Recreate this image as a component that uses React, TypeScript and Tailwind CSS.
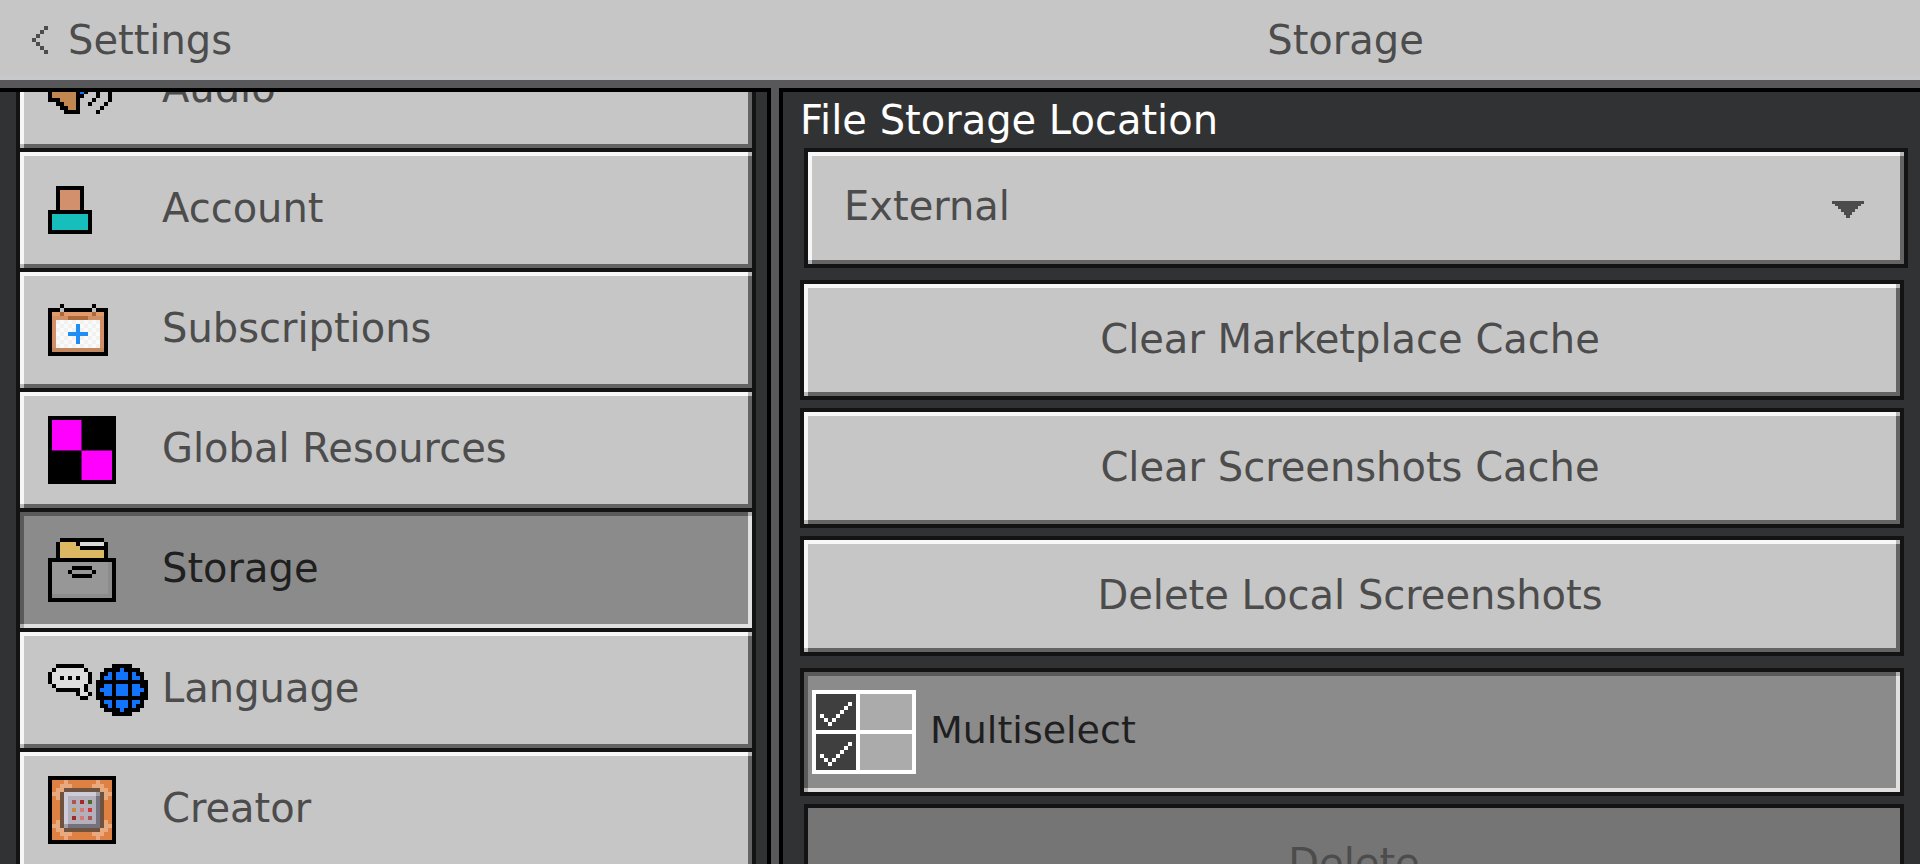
import { ReactNode } from 'react';
import clsx from 'clsx';

const PALETTE: Record<string, string> = {
  K: '#000000',
  S: '#d2906c',
  T: '#17bfbc',
  // calendar
  o: '#e39a6b',
  c: '#d29067',
  d: '#c4885f',
  n: '#ae693a',
  p: '#bdbdbd',
  w: '#fafafa',
  v: '#f1f1f1',
  B: '#1f8df5',
  // drawer
  Y: '#dbb861',
  L: '#d9d9d9',
  g: '#979797',
  h: '#8c8c8c',
  // language
  W: '#dedede',
  b: '#1273fb',
  // creator block
  O: '#df8143',
  l: '#e8a97f',
  m: '#70533f',
  a: '#cdcbd8',
  i: '#b3b0bb',
  s: '#a09daa',
  k: '#757280',
  '1': '#ae5552',
  '2': '#a12a29',
  '3': '#4f6b2c',
  '4': '#c48a3e',
  '5': '#d37a79',
  '6': '#d43635',
  // speaker
  r: '#c08850',
  D: '#4c4c4c',
};

const SPEAKER = [
  '.......K........',
  '......KK........',
  '.....KrK....K...',
  '....KrrK.....K..',
  'KKKKrrrK..K...K.',
  'KrrrrrrK...K..K.',
  'KrrrrrrKK...K..K',
  'KrrrrrrKbK..K..K',
  'KrrrrrrKbK..K..K',
  'KrrrrrrKbK..K..K',
  'KrrrrrrKbK..K..K',
  'KrrrrrrKK...K..K',
  'KKKrrrrK...K...K',
  '..KKrrrK..K...K.',
  '...KKrrK.....K..',
  '....KKKK....K...',
  '................',
  '................',
  '................',
  '................',
];

const ACCOUNT = [
  '..KKKKKKK..',
  '..KSSSSSK..',
  '..KSSSSSK..',
  '..KSSSSSK..',
  '..KSSSSSK..',
  '..KSSSSSK..',
  'KKKKKKKKKKK',
  'KTTTTTTTTTK',
  'KTTTTTTTTTK',
  'KTTTTTTTTTK',
  'KTTTTTTTTTK',
  'KKKKKKKKKKK',
];

const CALENDAR = [
  '...K.......K...',
  'KKKpKKKKKKKpKKK',
  'KoonooooooonooK',
  'KccccnnnnnccccK',
  'KcvwvwvwvwvwvcK',
  'KcwvwvwBwvwvwcK',
  'KcvwvwvBvwvwvcK',
  'KcwvwBBBBBwvwcK',
  'KcvwvwvBvwvwvcK',
  'KcwvwvwBwvwvwcK',
  'KcvwvwvwvwvwvcK',
  'KdddddddddddddK',
  'KKKKKKKKKKKKKKK',
];

const DRAWER = [
  '...KKKKKKKKKKK...',
  '..KYYYYKLLLLLLK..',
  '..KYYYYYKKKKKKK..',
  '..KYYYYYYYYYYYK..',
  '..KYYYYYYYYYYYK..',
  'KKKKKKKKKKKKKKKKK',
  'KgggggggggggggghK',
  'KgggggKKKKKgggghK',
  'KggggKgggggKggghK',
  'KgggggKKKKKgggghK',
  'KgggggggggggggghK',
  'KgggggggggggggghK',
  'KgggggggggggggghK',
  'KgggggggggggggghK',
  'KhhhhhhhhhhhhhhhK',
  'KKKKKKKKKKKKKKKKK',
];

const LANGUAGE = [
  '..KKKKKKK.......KKKKK....',
  '.KWWWWWWWK....KKKKbKKKK..',
  'KWWWWWWWWWK..KKbKbbbKbKK.',
  'KWWKWKWKWWK..KbbKbbbKbbK.',
  'KWWWWWWWWWK.KKKKKKKKKKKKK',
  '.KWWWWWWWK..KKbbKbbbKbbKK',
  '..KKKKKKWK..KbbbKbbbKbbbK',
  '.......KWWK.KKbbKbbbKbbKK',
  '........KK..KKKKKKKKKKKKK',
  '.............KbbKbbbKbbK.',
  '.............KKbKbbbKbKK.',
  '..............KKKKbKKKK..',
  '................KKKKK....',
];

const CREATOR = [
  'KKKKKKKKKKKKKKKKK',
  'KOOOlOOOOOOOlOOOK',
  'KOOlllOOOOOlllOOK',
  'KOllmmmmmmmmmllOK',
  'KllmaaaaaaaasmllK',
  'KOlmaiiiiiiikmlOK',
  'KOOmai1i2i3ikmOOK',
  'KOOmaiiiiiiikmOOK',
  'KOOmai4i5i6ikmOOK',
  'KOOmaiiiiiiikmOOK',
  'KOOmai2i5i1ikmOOK',
  'KOlmaiiiiiiikmlOK',
  'KllmskkkkkkkkmllK',
  'KOllmmmmmmmmmllOK',
  'KOOlllOOOOOlllOOK',
  'KOOOlOOOOOOOlOOOK',
  'KKKKKKKKKKKKKKKKK',
];

const CHEVRON = ['...D', '..D.', '.D..', 'D...', '.D..', '..D.', '...D'];

function PixelIcon({ rows }: { rows: string[] }) {
  const width = rows[0].length;
  return (
    <svg
      width={width * 4}
      height={rows.length * 4}
      viewBox={`0 0 ${width} ${rows.length}`}
      shapeRendering="crispEdges"
      aria-hidden="true"
      className="shrink-0"
    >
      {rows.map((row, y) =>
        row
          .split('')
          .map((ch, x) =>
            ch === '.' ? null : (
              <rect key={`${x}-${y}`} x={x} y={y} width={1} height={1} fill={PALETTE[ch]} />
            )
          )
      )}
    </svg>
  );
}

function MissingTextureIcon() {
  return (
    <svg width={68} height={68} viewBox="0 0 68 68" shapeRendering="crispEdges" aria-hidden="true">
      <rect width={68} height={68} fill="#000" />
      <rect x={4} y={4} width={30} height={31} fill="#7a007a" />
      <rect x={33} y={34} width={31} height={30} fill="#7a007a" />
      <rect x={4} y={4} width={29} height={30} fill="#f0f" />
      <rect x={34} y={35} width={30} height={29} fill="#f0f" />
    </svg>
  );
}

function MultiselectIcon() {
  const check = [[1, 5], [2, 6], [3, 7], [4, 6], [5, 5], [6, 4], [7, 3], [8, 2]];
  return (
    <svg
      width={104}
      height={84}
      viewBox="0 0 26 21"
      shapeRendering="crispEdges"
      aria-hidden="true"
      className="shrink-0"
    >
      <rect width={26} height={21} fill="#fff" />
      {[1, 11].map((top) => (
        <g key={top}>
          <rect x={1} y={top} width={10} height={9} fill="#3f3f3f" />
          <rect x={12} y={top} width={13} height={9} fill="#ababab" />
          {check.map(([x, y]) => (
            <rect key={x} x={x + 1} y={y + top} width={1} height={1} fill="#fff" />
          ))}
        </g>
      ))}
    </svg>
  );
}

// 4px bevel with square blended corners, which plain borders would mitre
const bevel =
  'border-4 border-transparent [background:linear-gradient(var(--mid),var(--mid))_100%_0/4px_4px_no-repeat_border-box,linear-gradient(var(--mid),var(--mid))_0_100%/4px_4px_no-repeat_border-box,linear-gradient(var(--hi),var(--hi))_0_0/100%_4px_no-repeat_border-box,linear-gradient(var(--hi),var(--hi))_0_0/4px_100%_no-repeat_border-box,linear-gradient(var(--lo),var(--lo))_0_100%/100%_4px_no-repeat_border-box,linear-gradient(var(--lo),var(--lo))_100%_0/4px_100%_no-repeat_border-box_var(--face)]';
const raised = clsx(
  bevel,
  '[--hi:#f7f7f7] [--lo:#656465] [--mid:#b8b8b8] [--face:#c6c6c6] text-[#4c4c4c]'
);
const pressed = clsx(
  bevel,
  '[--hi:#5a5a5a] [--lo:#e0e0e0] [--mid:#b0b0b0] [--face:#8b8b8b] text-[#1f1f1f]'
);

interface NavItem {
  label: string;
  icon: ReactNode;
}

const navItems: NavItem[] = [
  { label: 'Audio', icon: <PixelIcon rows={SPEAKER} /> },
  { label: 'Account', icon: <PixelIcon rows={ACCOUNT} /> },
  { label: 'Subscriptions', icon: <PixelIcon rows={CALENDAR} /> },
  { label: 'Global Resources', icon: <MissingTextureIcon /> },
  { label: 'Storage', icon: <PixelIcon rows={DRAWER} /> },
  { label: 'Language', icon: <PixelIcon rows={LANGUAGE} /> },
  { label: 'Creator', icon: <PixelIcon rows={CREATOR} /> },
];

function Sidebar({ active }: { active: string }) {
  return (
    <nav className="overflow-hidden border-t-4 border-black bg-[#313233] pl-4 pr-[11px]">
      {/* list is scrolled so the first entry is half hidden */}
      <ul className="-mt-16 flex flex-col gap-1 bg-[#131313] p-1">
        {navItems.map((item) => (
          <li key={item.label}>
            <button
              type="button"
              aria-current={item.label === active ? 'page' : undefined}
              className={clsx(
                'flex h-[116px] w-full items-center pl-6 text-left',
                item.label === active ? pressed : raised
              )}
            >
              <span className="flex w-[114px] shrink-0 items-center">{item.icon}</span>
              <span className="pb-1">{item.label}</span>
            </button>
          </li>
        ))}
      </ul>
    </nav>
  );
}

function ActionButton({ children }: { children: ReactNode }) {
  return (
    <div className="bg-[#131313] p-1">
      <button type="button" className={clsx('h-28 w-full pb-0.5 pr-1', raised)}>
        {children}
      </button>
    </div>
  );
}

function StoragePanel() {
  return (
    <main className="min-w-0 grow overflow-hidden border-t-4 border-black bg-[#313233] pl-[17px] pr-4">
      <label htmlFor="location" className="block py-2 leading-10 text-white">
        File Storage Location
      </label>
      <div className="relative -mr-1 ml-1 bg-[#131313] p-1">
        <select
          id="location"
          className={clsx('block h-28 w-full appearance-none rounded-none pb-1 pl-8 pr-20', raised)}
        >
          <option>External</option>
        </select>
        <svg
          width={32}
          height={18}
          viewBox="0 0 32 18"
          shapeRendering="crispEdges"
          aria-hidden="true"
          className="pointer-events-none absolute right-11 top-13"
        >
          <path
            d="M0 1H32V4H29V6H26V9H23V12H20V15H18V18H14V15H12V12H9V9H6V6H3V4H0Z"
            fill="#4c4c4c"
          />
        </svg>
      </div>
      <div className="mt-3 flex flex-col gap-2">
        <ActionButton>Clear Marketplace Cache</ActionButton>
        <ActionButton>Clear Screenshots Cache</ActionButton>
        <ActionButton>Delete Local Screenshots</ActionButton>
      </div>
      <div className="mt-3 bg-[#131313] p-1">
        <button
          type="button"
          aria-pressed="true"
          className={clsx('flex h-30 w-full items-center gap-3.5 pl-1 text-[38px]', pressed)}
        >
          <MultiselectIcon />
          <span className="pb-1">Multiselect</span>
        </button>
      </div>
      <div className="ml-1 mt-2 bg-[#131313] p-1">
        <button type="button" disabled className="h-28 w-full bg-[#757575] pb-0.5 text-[#4c4c4c]">
          Delete
        </button>
      </div>
    </main>
  );
}

export default function App() {
  return (
    <div className="flex h-screen flex-col overflow-hidden bg-[#313233] font-['DejaVu_Sans',sans-serif] text-[40px] leading-none">
      <header className="grid h-22 shrink-0 grid-cols-[767fr_1153fr] items-center border-b-8 border-[#58585a] bg-[#c6c6c6] text-[#4c4c4c] shadow-[inset_0_-4px_0_#c6c8ca]">
        <button type="button" className="flex items-center gap-5 justify-self-start pl-8">
          <PixelIcon rows={CHEVRON} />
          <span>Settings</span>
        </button>
        <h1 className="pl-1 text-center">Storage</h1>
      </header>
      <div className="grid min-h-0 grow grid-cols-[767fr_1153fr]">
        <Sidebar active="Storage" />
        <div className="flex min-h-0 min-w-0">
          <div className="w-4 shrink-0 border-x-4 border-black bg-[#58585a]" />
          <StoragePanel />
        </div>
      </div>
    </div>
  );
}
